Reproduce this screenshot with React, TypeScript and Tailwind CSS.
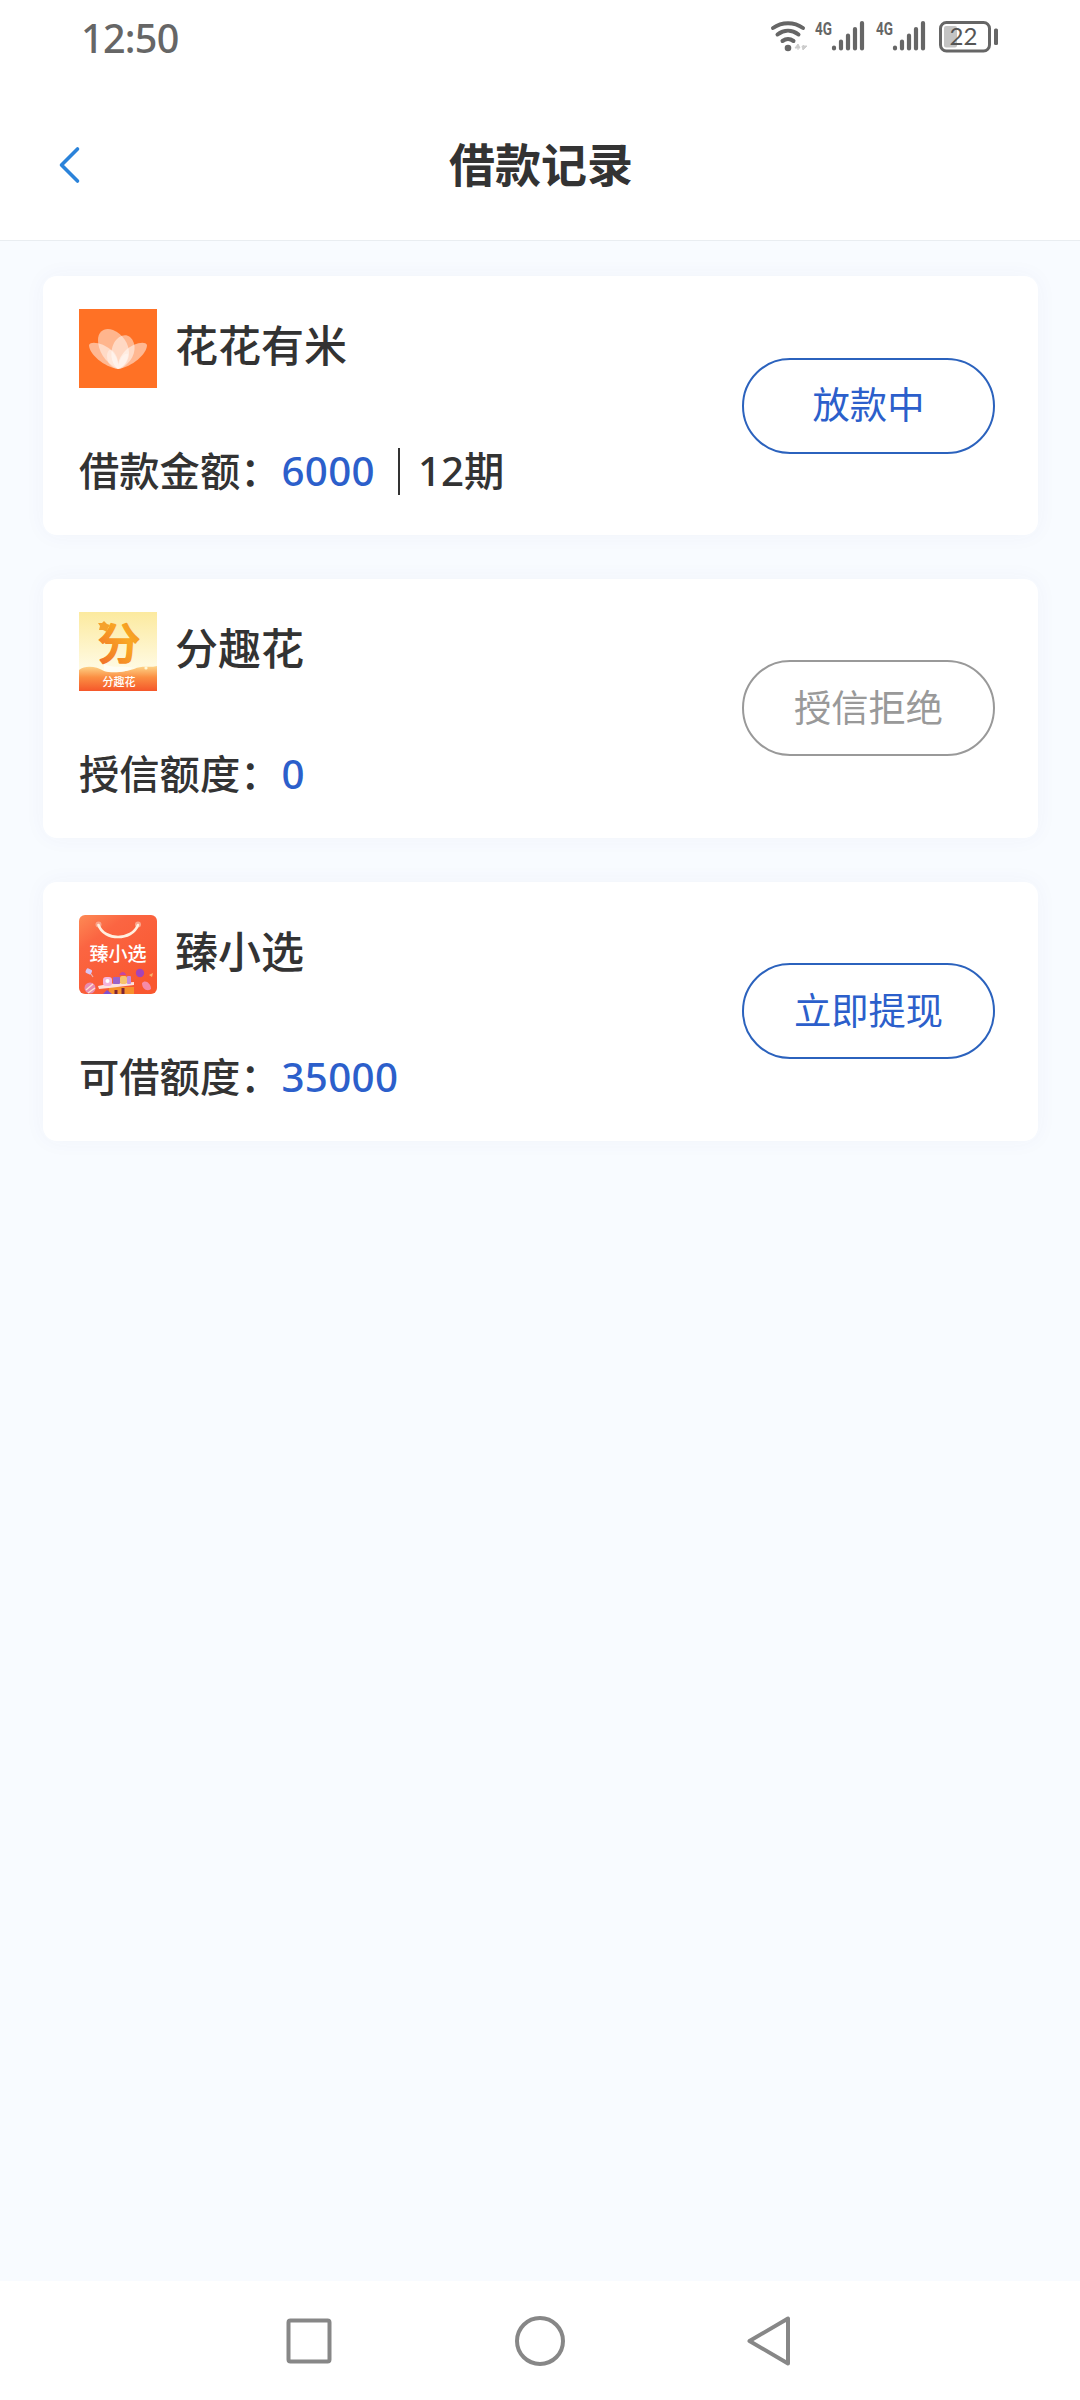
import type { ReactNode } from "react";

interface LoanRecord {
  name: string;
  logo: ReactNode;
  label: string;
  amount: string;
  term?: string;
  action: string;
  disabled?: boolean;
}

function HuahuaLogo() {
  return (
    <svg viewBox="0 0 78 79" className="h-[79px] w-[78px] shrink-0">
      <rect width="78" height="79" fill="#ff7125" />
      <g fill="#fff">
        <path d="M39 60C25 58 10 45 10 36C12 31 26 35 32 41C38 47 40 54 39 60Z" fillOpacity="0.5" />
        <path d="M39 60C53 58 68 45 68 36C66 31 53 35 47 41C41 47 38 54 39 60Z" fillOpacity="0.5" />
        <path d="M39 60C25 53 19 41 19 31C19 22 26 18 34 21C44 25 50 35 50 44C50 52 45 58 39 60Z" fillOpacity="0.48" />
        <path d="M39 60C31 54 31 41 35 34C39 27 46 24 51 28C58 34 57 47 48 55C45 58 42 60 39 60Z" fillOpacity="0.48" />
        <path d="M39 60C32 59 28 54 28 47C28 42 31 39 34 42C38 46 40 52 39 60ZM39 60C46 57 49 51 49 45C45 43 40 50 39 60Z" fillOpacity="0.35" />
      </g>
    </svg>
  );
}

function FenquLogo() {
  return (
    <svg viewBox="0 0 78 79" className="h-[79px] w-[78px] shrink-0 overflow-visible">
      <defs>
        <linearGradient id="fq-sky" x1="0" y1="0" x2="0" y2="1">
          <stop offset="0" stopColor="#fcea9f" />
          <stop offset="0.75" stopColor="#fffbe6" />
        </linearGradient>
        <linearGradient id="fq-ground" x1="0" y1="0" x2="0" y2="1">
          <stop offset="0" stopColor="#fdd58a" />
          <stop offset="0.45" stopColor="#fb8f43" />
          <stop offset="1" stopColor="#f5572a" />
        </linearGradient>
        <linearGradient id="fq-mark" x1="0" y1="1" x2="1" y2="0">
          <stop offset="0" stopColor="#f0682a" />
          <stop offset="0.6" stopColor="#f9a824" />
          <stop offset="1" stopColor="#ee8a22" />
        </linearGradient>
      </defs>
      <rect width="78" height="79" fill="url(#fq-sky)" />
      <path d="M0 58C6 53 17 54 25 59C34 61 46 60 55 57C63 53 70 56 78 54V79H0Z" fill="url(#fq-ground)" />
      <path d="M25 52C34 57 44 53 54 56C46 61 32 61 25 59Z" fill="#fffdf2" />
      <circle cx="67" cy="56" r="1.6" fill="#fff8d6" />
      <text
        x="40"
        y="46.5"
        textAnchor="middle"
        fontSize="42"
        fontWeight="500"
        fill="url(#fq-mark)"
        stroke="url(#fq-mark)"
        strokeWidth="1.8"
        strokeLinejoin="round"
        fontFamily="'Noto Sans CJK SC', sans-serif"
      >
        分
      </text>
      <path d="M25 9L28 12L31 13L29 16L28 20L24 18L20 18L21 14L19 11L23 11Z" fill="#f5a22c" />
      <text x="40" y="74" textAnchor="middle" fontSize="11" fontWeight="500" fill="#fff" fontFamily="'Noto Sans CJK SC', sans-serif">
        分趣花
      </text>
    </svg>
  );
}

function ZhenxuanLogo() {
  return (
    <svg viewBox="0 0 78 79" className="h-[79px] w-[78px] shrink-0 rounded-md">
      <defs>
        <linearGradient id="zx-bag" x1="0" y1="0" x2="0.7" y2="1">
          <stop offset="0" stopColor="#fd8a55" />
          <stop offset="0.3" stopColor="#fb6542" />
          <stop offset="1" stopColor="#f9572f" />
        </linearGradient>
      </defs>
      <rect width="78" height="79" fill="url(#zx-bag)" />
      <g fill="#f9a48a">
        <circle cx="19.5" cy="9.5" r="3" />
        <circle cx="59" cy="9.5" r="3" />
      </g>
      <path d="M19.5 10C25 26 53 26 59 10" fill="none" stroke="#fff0e0" strokeWidth="2.6" strokeLinecap="round" />
      <text x="39" y="46" textAnchor="middle" fontSize="19" fontWeight="500" fill="#fff" fontFamily="'Noto Sans CJK SC', sans-serif">
        臻小选
      </text>
      {/* confetti and gifts along the bottom */}
      <rect x="7" y="54" width="6" height="5" rx="1.5" fill="#d9c4f3" transform="rotate(25 10 56)" />
      <path d="M12 59L14 62" stroke="#f0b5b0" strokeWidth="1.2" />
      <circle cx="61" cy="58" r="4.2" fill="#a544b8" />
      <path d="M70 60L74 58L73 62Z" fill="#fbb26a" />
      <path d="M63 68C66 64 72 68 72 74C68 77 63 74 63 68Z" fill="#f58ba8" />
      <circle cx="11" cy="73" r="5.5" fill="#e88bb0" />
      <path d="M7 75L14 69M9 78L16 73" stroke="#ffe0d0" strokeWidth="1.4" />
      <path d="M30 72H55V79H30Z" fill="#f7912c" />
      <path d="M37 79V75M44 79V73" stroke="#7d2436" strokeWidth="3" />
      <path d="M19 71L29 69L55 67V70L30 73L20 74Z" fill="#fde1dc" />
      <rect x="24" y="62" width="9" height="9" rx="3" fill="#f3b3dc" />
      <circle cx="28.5" cy="66" r="2" fill="#fff" />
      <rect x="34" y="62" width="7" height="7" rx="1" fill="#9a63c9" />
      <path d="M40 60C42 56 46 56 47 60Z" fill="#c447a0" />
      <rect x="41" y="61" width="7" height="8" rx="2" fill="#f7c36d" />
      <rect x="48" y="61" width="4" height="8" rx="1" fill="#c78cdb" />
      <path d="M24 79L28 75L33 79Z" fill="#8050d0" />
    </svg>
  );
}

const RECORDS: LoanRecord[] = [
  { name: "花花有米", logo: <HuahuaLogo />, label: "借款金额：", amount: "6000", term: "12期", action: "放款中" },
  { name: "分趣花", logo: <FenquLogo />, label: "授信额度：", amount: "0", action: "授信拒绝", disabled: true },
  { name: "臻小选", logo: <ZhenxuanLogo />, label: "可借额度：", amount: "35000", action: "立即提现" },
];

function Signal() {
  return (
    <svg viewBox="0 0 50 32" className="h-8 w-[50px] overflow-visible">
      <text
        x="0"
        y="14.5"
        fontSize="19"
        fontWeight="700"
        fill="#666"
        textLength="17"
        lengthAdjust="spacingAndGlyphs"
        fontFamily="Roboto, sans-serif"
      >
        4G
      </text>
      <path d="M19 27.5V28.5M26 21.5V28.5M33 15.5V28.5M40 9V28.5M47 3V28.5" stroke="#666" strokeWidth="4.2" strokeLinecap="round" />
    </svg>
  );
}

function StatusBar() {
  return (
    <div className="flex h-[76px] items-start justify-between pr-[80px] pl-[81px]">
      <span className="mt-[8px] text-[39.5px] leading-[60px] font-medium tracking-[-0.7px] text-[#666]">12:50</span>
      <div className="mt-5 flex">
        <svg viewBox="0 0 38 32" className="mr-[7px] h-8 w-[38px]">
          <g fill="none" stroke="#666" strokeWidth="4" strokeLinecap="round">
            <path d="M3 8C12 1.500 24 1.500 33 8" />
            <path d="M7.500 14.500C14 9.500 22 9.500 28.500 14.500" />
            <path d="M12.500 21C16 18.500 20 18.500 23.500 21" />
          </g>
          <circle cx="18" cy="28" r="3.3" fill="#666" />
          <path d="M28 24L25 28H30ZM28 25V30M33 30L37 26H32ZM33.5 30V25" fill="#ccc" stroke="#ccc" strokeWidth="1" />
        </svg>
        <Signal />
        <span className="w-[11px]" />
        <Signal />
        <svg viewBox="0 0 62 34" className="ml-[12px] h-[34px] w-[62px]">
          <rect x="2.5" y="2.5" width="49" height="28.5" rx="6" fill="none" stroke="#666" strokeWidth="3" />
          <rect x="6" y="6" width="13" height="21.5" rx="2" fill="#c4c4c4" />
          <text x="25.5" y="25" textAnchor="middle" fontSize="24" fill="#555" fontFamily="Lato, sans-serif">
            22
          </text>
          <rect x="56" y="8.5" width="4" height="16.5" rx="1.5" fill="#666" />
        </svg>
      </div>
    </div>
  );
}

function RecordCard({ record }: { record: LoanRecord }) {
  return (
    <div className="flex h-[259.4px] items-center justify-between rounded-[14px] bg-white pr-[43px] pl-9 shadow-[0_0_22px_rgba(60,70,140,0.045)]">
      <div className="flex h-full flex-col pt-[33px]">
        <div className="flex h-[79px] items-start">
          {record.logo}
          <span className="ml-[18px] text-[43px] leading-[73px] font-medium">{record.name}</span>
        </div>
        <div className="mt-[51px] flex h-[64px] items-center text-[40.3px] leading-[64px] font-medium">
          <span>{record.label}</span>
          <span className="ml-px tracking-[0.3px] text-[#2c5fcb]">{record.amount}</span>
          {record.term && (
            <>
              <span className="mr-[18px] ml-[23px] h-[47px] w-[2px] bg-[#333]" />
              <span>{record.term}</span>
            </>
          )}
        </div>
      </div>
      <button
        className={`h-24 w-[253px] rounded-full border-2 pb-[2px] text-[37.3px] leading-none ${
          record.disabled ? "border-[#999] text-[#999]" : "border-[#2b62bd] text-[#2c5fcb]"
        }`}
      >
        {record.action}
      </button>
    </div>
  );
}

export default function App() {
  return (
    <div className="flex h-[2400px] w-[1080px] flex-col bg-[#f8fbff] font-['Noto_Sans','Noto_Sans_CJK_SC',sans-serif] text-[#333]">
      <header className="h-[241px] border-b border-[#e9edf1] bg-white">
        <StatusBar />
        <div className="grid h-[164px] grid-cols-[1fr_auto_1fr] items-center pt-[13px]">
          <svg viewBox="0 0 24 38" className="mt-px ml-[58px] h-[38px] w-6">
            <path d="M19.5 3L3.5 19L19.5 35" fill="none" stroke="#2b83da" strokeWidth="3.6" strokeLinecap="round" strokeLinejoin="round" />
          </svg>
          <h1 className="pb-[2px] pl-[2px] text-[46px] leading-[60px] font-bold">借款记录</h1>
        </div>
      </header>

      <main className="flex flex-1 flex-col gap-[43.4px] pt-[35px] pr-[42px] pl-[43px]">
        {RECORDS.map((record) => (
          <RecordCard key={record.name} record={record} />
        ))}
      </main>

      <nav className="flex h-[119px] items-center justify-center gap-[182px] bg-white">
        <svg viewBox="0 0 50 50" className="h-[50px] w-[50px]">
          <rect x="5.5" y="4.5" width="41" height="41" rx="2" fill="none" stroke="#878787" strokeWidth="4" />
        </svg>
        <svg viewBox="0 0 50 50" className="h-[50px] w-[50px]">
          <circle cx="25" cy="25" r="23" fill="none" stroke="#878787" strokeWidth="4" />
        </svg>
        <svg viewBox="0 0 50 50" className="h-[50px] w-[50px]">
          <path d="M41 2.500V47.500L2.500 25Z" fill="none" stroke="#878787" strokeWidth="4" strokeLinejoin="round" />
        </svg>
      </nav>
    </div>
  );
}
